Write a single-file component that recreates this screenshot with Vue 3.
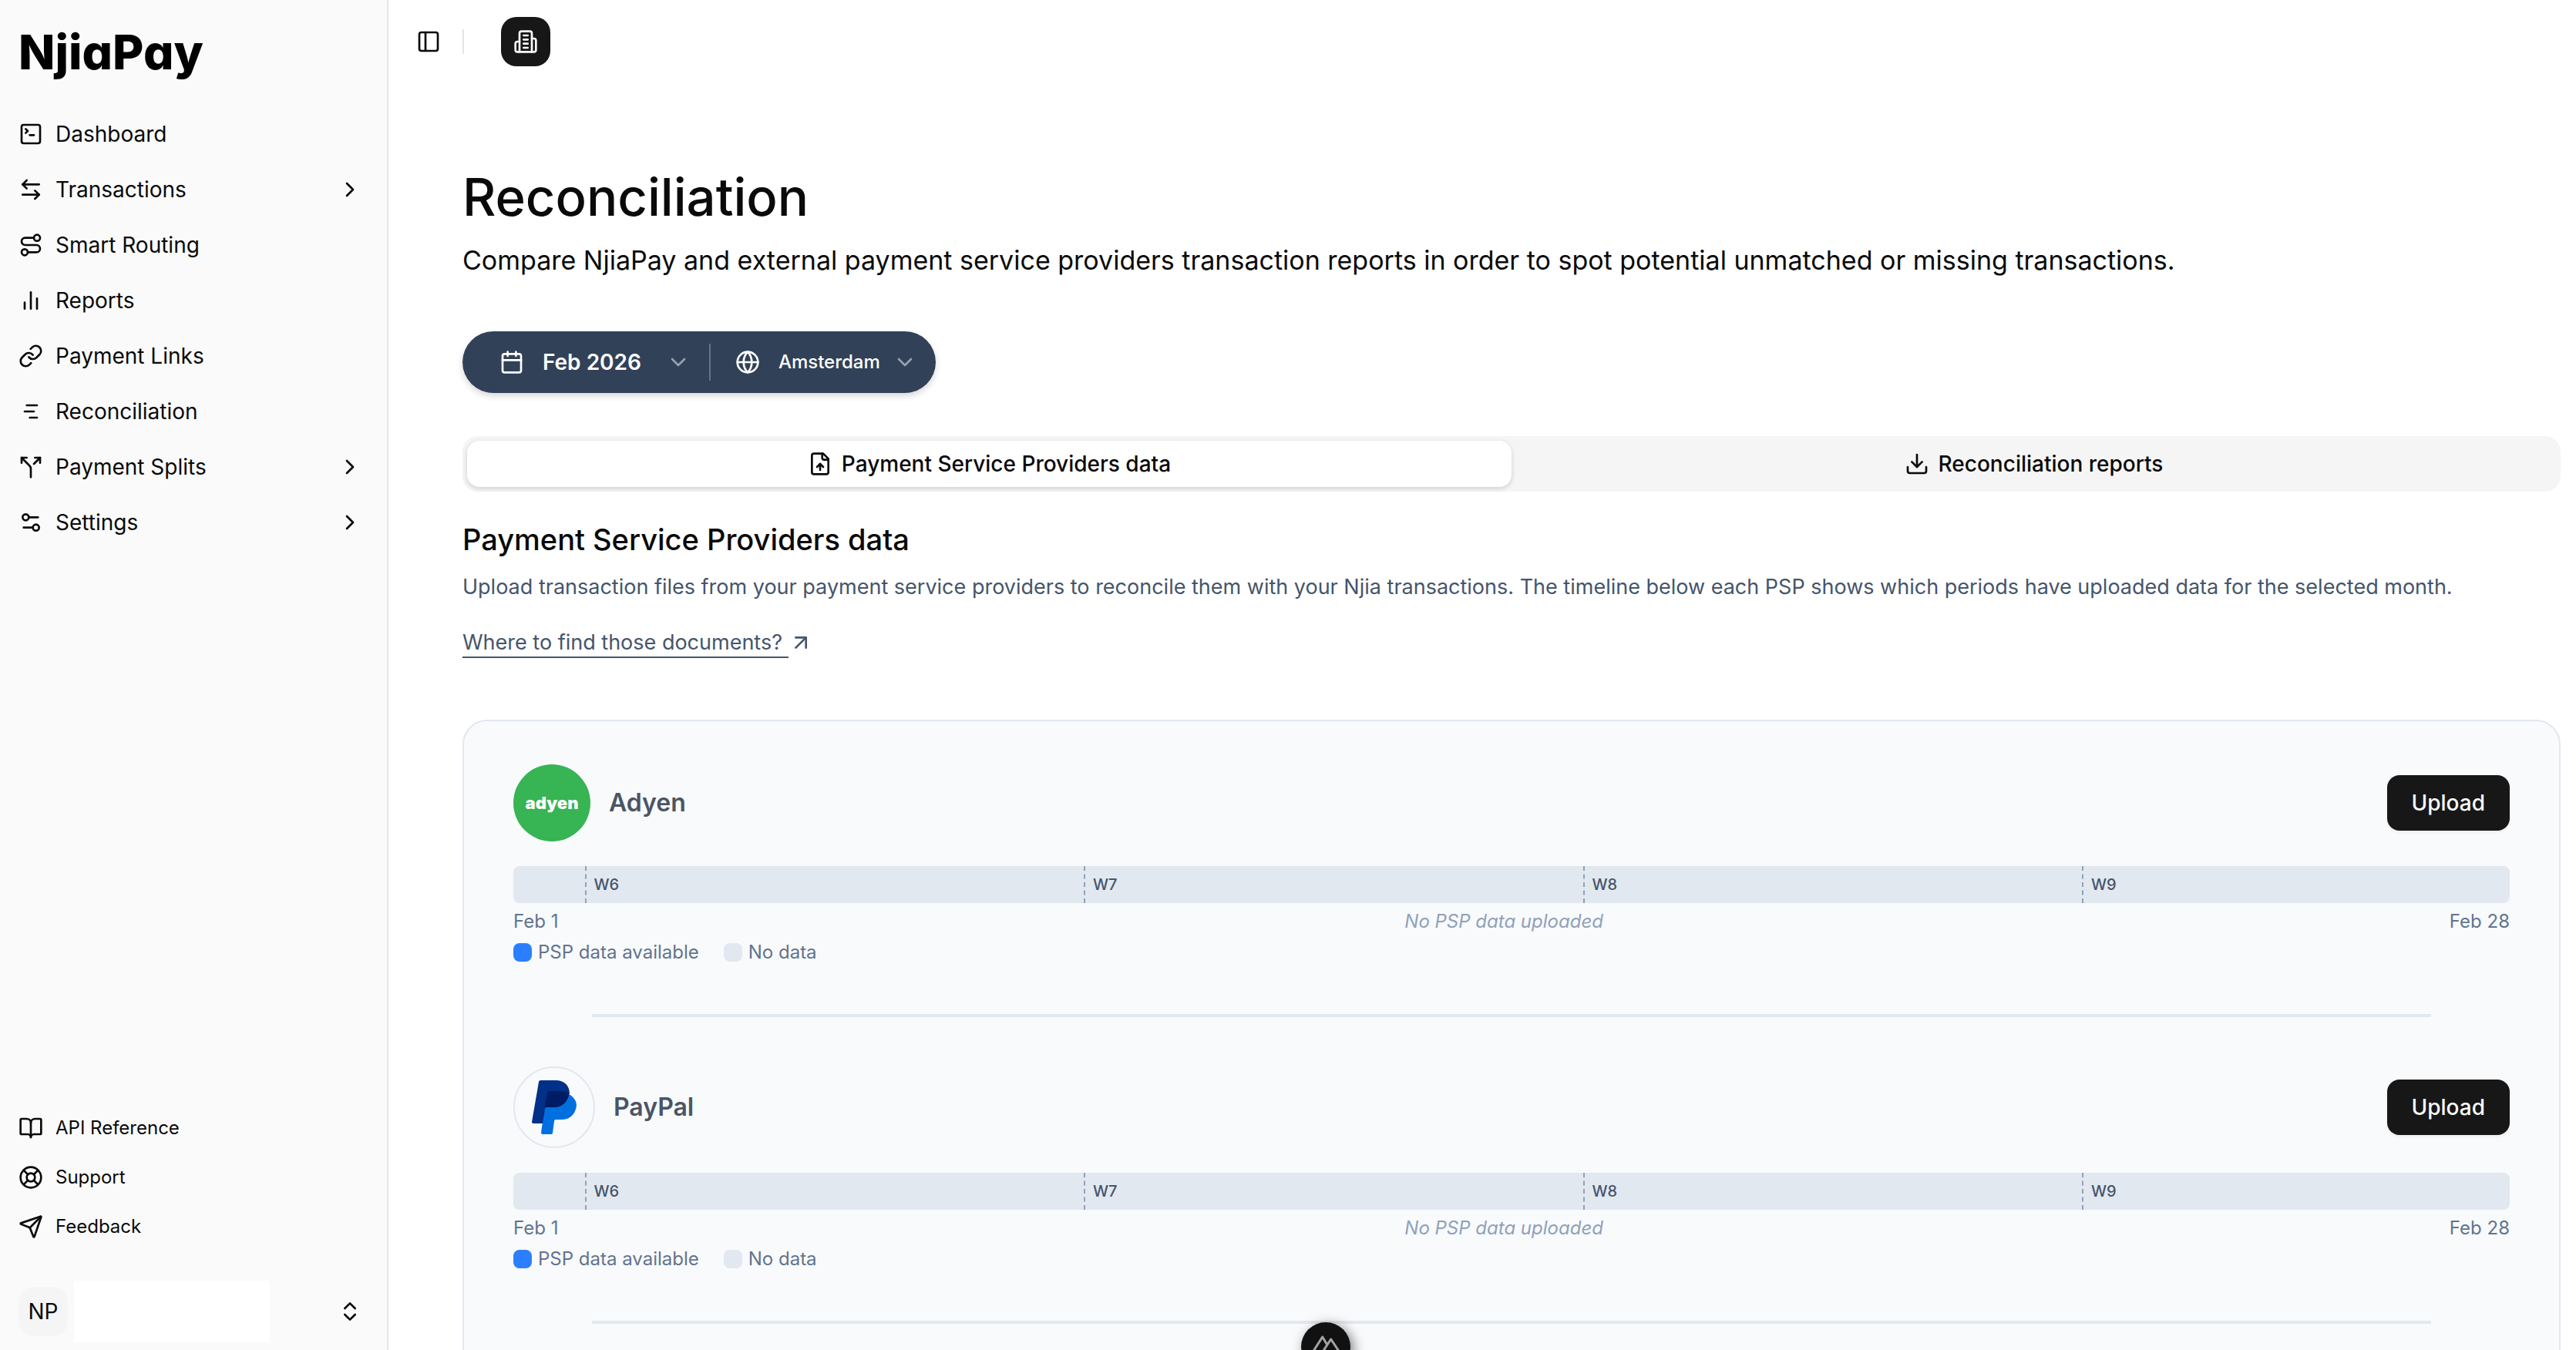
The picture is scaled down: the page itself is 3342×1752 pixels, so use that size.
<script setup>
import { ref } from 'vue';

const icons = {
  panel: ['M5 3h14a2 2 0 0 1 2 2v14a2 2 0 0 1-2 2H5a2 2 0 0 1-2-2V5a2 2 0 0 1 2-2z', 'M9 3v18'],
  building: ['M6 22V4a2 2 0 0 1 2-2h8a2 2 0 0 1 2 2v18Z', 'M6 12H4a2 2 0 0 0-2 2v6a2 2 0 0 0 2 2h2', 'M18 9h2a2 2 0 0 1 2 2v9a2 2 0 0 1-2 2h-2', 'M10 6h4', 'M10 10h4', 'M10 14h4', 'M10 18h4'],
  dashboard: ['m7 11 2-2-2-2', 'M11 13h4', 'M5 3h14a2 2 0 0 1 2 2v14a2 2 0 0 1-2 2H5a2 2 0 0 1-2-2V5a2 2 0 0 1 2-2z'],
  transactions: ['M8 3 4 7l4 4', 'M4 7h16', 'm16 21 4-4-4-4', 'M20 17H4'],
  routing: ['M9 19a3 3 0 1 1-6 0 3 3 0 0 1 6 0z', 'M9 19h8.5a3.5 3.5 0 0 0 0-7h-11a3.5 3.5 0 0 1 0-7H15', 'M21 5a3 3 0 1 1-6 0 3 3 0 0 1 6 0z'],
  reports: ['M18 20V10', 'M12 20V4', 'M6 20v-6'],
  link: ['M10 13a5 5 0 0 0 7.54.54l3-3a5 5 0 0 0-7.07-7.07l-1.72 1.71', 'M14 11a5 5 0 0 0-7.54-.54l-3 3a5 5 0 0 0 7.07 7.07l1.71-1.71'],
  gantt: ['M8 6h10', 'M6 12h9', 'M11 18h7'],
  split: ['M16 3h5v5', 'M8 3H3v5', 'M12 22v-8.3a4 4 0 0 0-1.172-2.872L3 3', 'm15 9 6-6'],
  settings: ['M14 17H5', 'M19 7h-9', 'M20 17a3 3 0 1 1-6 0 3 3 0 0 1 6 0z', 'M10 7a3 3 0 1 1-6 0 3 3 0 0 1 6 0z'],
  book: ['M12 7v14', 'M3 18a1 1 0 0 1-1-1V4a1 1 0 0 1 1-1h5a4 4 0 0 1 4 4 4 4 0 0 1 4-4h5a1 1 0 0 1 1 1v13a1 1 0 0 1-1 1h-6a3 3 0 0 0-3 3 3 3 0 0 0-3-3z'],
  support: ['M22 12a10 10 0 1 1-20 0 10 10 0 0 1 20 0z', 'm4.93 4.93 4.24 4.24', 'm14.83 9.17 4.24-4.24', 'm14.83 14.83 4.24 4.24', 'm9.17 14.83-4.24 4.24', 'M16 12a4 4 0 1 1-8 0 4 4 0 0 1 8 0z'],
  send: ['M14.536 21.686a.5.5 0 0 0 .937-.024l6.5-19a.496.496 0 0 0-.635-.635l-19 6.5a.5.5 0 0 0-.024.937l7.93 3.18a2 2 0 0 1 1.112 1.11z', 'm21.854 2.147-10.94 10.939'],
  chevronRight: ['m9 18 6-6-6-6'],
  chevronDown: ['m6 9 6 6 6-6'],
  upDown: ['m7 15 5 5 5-5', 'm7 9 5-5 5 5'],
  calendar: ['M8 2v4', 'M16 2v4', 'M5 4h14a2 2 0 0 1 2 2v14a2 2 0 0 1-2 2H5a2 2 0 0 1-2-2V6a2 2 0 0 1 2-2z', 'M3 10h18'],
  globe: ['M22 12a10 10 0 1 1-20 0 10 10 0 0 1 20 0z', 'M12 2a14.5 14.5 0 0 0 0 20 14.5 14.5 0 0 0 0-20', 'M2 12h20'],
  fileUp: ['M15 2H6a2 2 0 0 0-2 2v16a2 2 0 0 0 2 2h12a2 2 0 0 0 2-2V7Z', 'M14 2v4a2 2 0 0 0 2 2h4', 'M12 12v6', 'm15 15-3-3-3 3'],
  download: ['M12 15V3', 'M21 15v4a2 2 0 0 1-2 2H5a2 2 0 0 1-2-2v-4', 'm7 10 5 5 5-5'],
  arrowUpRight: ['M7 7h10v10', 'M7 17 17 7']
};

const navItems = [
  { label: 'Dashboard', icon: 'dashboard' },
  { label: 'Transactions', icon: 'transactions', nested: true },
  { label: 'Smart Routing', icon: 'routing' },
  { label: 'Reports', icon: 'reports' },
  { label: 'Payment Links', icon: 'link' },
  { label: 'Reconciliation', icon: 'gantt' },
  { label: 'Payment Splits', icon: 'split', nested: true },
  { label: 'Settings', icon: 'settings', nested: true }
];

const helpItems = [
  { label: 'API Reference', icon: 'book' },
  { label: 'Support', icon: 'support' },
  { label: 'Feedback', icon: 'send' }
];

const tabs = [
  { id: 'psp', label: 'Payment Service Providers data', icon: 'fileUp' },
  { id: 'reports', label: 'Reconciliation reports', icon: 'download' }
];
const activeTab = ref('psp');

const providers = ['Adyen', 'PayPal'];

// February 2026 has 28 days, the first Monday is the 2nd
const daysInMonth = 28;
const weeks = [
  { label: 'W6', day: 1 },
  { label: 'W7', day: 8 },
  { label: 'W8', day: 15 },
  { label: 'W9', day: 22 }
];

function weekOffset(day) {
  return `${(day / daysInMonth) * 100}%`;
}
</script>

<template>
  <div class="app">
    <aside class="sidebar">
      <a href="#" class="brand">NjiaPay</a>

      <nav class="nav">
        <a v-for="item in navItems" :key="item.label" href="#" class="nav-item">
          <svg class="icon" viewBox="0 0 24 24"><path v-for="d in icons[item.icon]" :key="d" :d="d" /></svg>
          <span class="nav-label">{{ item.label }}</span>
          <svg v-if="item.nested" class="icon" viewBox="0 0 24 24"><path :d="icons.chevronRight[0]" /></svg>
        </a>
      </nav>

      <nav class="help">
        <a v-for="item in helpItems" :key="item.label" href="#" class="help-item">
          <svg class="icon" viewBox="0 0 24 24"><path v-for="d in icons[item.icon]" :key="d" :d="d" /></svg>
          <span>{{ item.label }}</span>
        </a>
      </nav>

      <button class="account" type="button">
        <span class="avatar">NP</span>
        <span class="account-name"></span>
        <svg class="icon" viewBox="0 0 24 24"><path v-for="d in icons.upDown" :key="d" :d="d" /></svg>
      </button>
    </aside>

    <main class="main">
      <header class="topbar">
        <button class="panel-toggle" type="button" aria-label="Toggle sidebar">
          <svg class="icon" viewBox="0 0 24 24"><path v-for="d in icons.panel" :key="d" :d="d" /></svg>
        </button>
        <span class="topbar-divider"></span>
        <button class="org-btn" type="button" aria-label="Organisation">
          <svg class="icon" viewBox="0 0 24 24"><path v-for="d in icons.building" :key="d" :d="d" /></svg>
        </button>
      </header>

      <div class="content">
        <h1>Reconciliation</h1>
        <p class="lead">Compare NjiaPay and external payment service providers transaction reports in order to spot potential unmatched or missing transactions.</p>

        <div class="filters">
          <button class="filter month" type="button">
            <svg class="icon" viewBox="0 0 24 24"><path v-for="d in icons.calendar" :key="d" :d="d" /></svg>
            <span class="month-label">Feb 2026</span>
            <svg class="icon chevron" viewBox="0 0 24 24"><path :d="icons.chevronDown[0]" /></svg>
          </button>
          <span class="filter-divider"></span>
          <button class="filter zone" type="button">
            <svg class="icon" viewBox="0 0 24 24"><path v-for="d in icons.globe" :key="d" :d="d" /></svg>
            <span class="zone-label">Amsterdam</span>
            <svg class="icon chevron" viewBox="0 0 24 24"><path :d="icons.chevronDown[0]" /></svg>
          </button>
        </div>

        <div class="tabs" role="tablist">
          <button
            v-for="tab in tabs"
            :key="tab.id"
            type="button"
            role="tab"
            class="tab"
            :class="{ active: activeTab === tab.id }"
            :aria-selected="activeTab === tab.id"
            @click="activeTab = tab.id"
          >
            <svg class="icon" viewBox="0 0 24 24"><path v-for="d in icons[tab.icon]" :key="d" :d="d" /></svg>
            {{ tab.label }}
          </button>
        </div>

        <h2>Payment Service Providers data</h2>
        <p class="description">Upload transaction files from your payment service providers to reconcile them with your Njia transactions. The timeline below each PSP shows which periods have uploaded data for the selected month.</p>
        <a href="#" class="docs-link">
          <span class="docs-text">Where to find those documents?</span>
          <svg class="icon" viewBox="0 0 24 24"><path v-for="d in icons.arrowUpRight" :key="d" :d="d" /></svg>
        </a>

        <section class="card">
          <article v-for="provider in providers" :key="provider" class="provider">
            <div class="provider-head">
              <span v-if="provider === 'Adyen'" class="adyen-logo">adyen</span>
              <span v-else class="paypal-logo">
                <svg viewBox="0 0 58 70">
                  <path d="M50 19q8 6 8 14c-2 12-9 18-20 18H31q-2 0-2 2l-2 15q0 2-2 2H14q-2 0-2-2l6-43q1-6 5-6z" fill="#0070e0" />
                  <path d="M9 2q0-2 3-2h19c11 0 18 7 18 17C46 29 39 35 28 35H19q-2 0-2 3l-3 18H2q-2 0-2-2z" fill="#003087" />
                  <path d="M48 17C46 29 39 35 28 35H17l3-19q0-2 3-2h18q5 0 7 3z" fill="#001c64" />
                </svg>
              </span>
              <h3>{{ provider }}</h3>
              <button class="upload-btn" type="button">Upload</button>
            </div>
            <div class="timeline">
              <span v-for="week in weeks" :key="week.label" class="week" :style="{ left: weekOffset(week.day) }">{{ week.label }}</span>
            </div>
            <div class="dates">
              <span>Feb 1</span>
              <em>No PSP data uploaded</em>
              <span>Feb 28</span>
            </div>
            <div class="legend">
              <span class="legend-item"><i class="swatch available"></i>PSP data available</span>
              <span class="legend-item"><i class="swatch"></i>No data</span>
            </div>
          </article>
        </section>
      </div>
    </main>

    <button class="devtools" type="button" aria-label="Devtools">
      <svg viewBox="0 0 36 36" fill="none" stroke="#a3a3a3" stroke-width="3" stroke-linejoin="round">
        <path d="M1 25 13.700 5l6 10M13.500 25 24.700 8 36 25" />
      </svg>
    </button>
  </div>
</template>

<style>
body {
  overflow: hidden;
}
</style>

<style scoped>
.app {
  display: flex;
  height: 100vh;
  overflow: hidden;
  font-family: Inter, 'Liberation Sans', sans-serif;
  font-size: 28px;
  line-height: 40px;
  color: #0a0a0a;
  background-color: #fff;
}

button {
  font: inherit;
  color: inherit;
  border: none;
  padding: 0;
  background: none;
  cursor: pointer;
}

a {
  color: inherit;
  text-decoration: none;
}

h1, h2, h3, p {
  margin: 0;
}

.icon {
  width: 32px;
  height: 32px;
  flex-shrink: 0;
  fill: none;
  stroke: currentColor;
  stroke-width: 2;
  stroke-linecap: round;
  stroke-linejoin: round;
}

.sidebar {
  display: flex;
  flex-direction: column;
  flex-shrink: 0;
  width: 504px;
  box-sizing: border-box;
  padding: 32px 32px 10px 24px;
  background-color: #fafafa;
  border-right: 2px solid #e5e5e5;
}

/* cv11 is Inter's single-storey a */
.brand {
  font-size: 62px;
  line-height: 72px;
  font-weight: 800;
  font-feature-settings: 'cv11';
  color: #000;
}

.nav {
  display: flex;
  flex-direction: column;
  gap: 8px;
  padding-top: 38px;
}

.nav-item, .help-item {
  display: flex;
  align-items: center;
  gap: 16px;
  height: 64px;
}

.nav-label {
  flex: 1;
}

.help {
  margin-top: auto;
  font-size: 24px;
}

.account {
  display: flex;
  align-items: center;
  gap: 8px;
  height: 80px;
  margin-top: 38px;
  text-align: left;
}

.account .icon {
  margin-left: auto;
}

.avatar {
  display: flex;
  align-items: center;
  justify-content: center;
  width: 64px;
  height: 64px;
  border-radius: 20px;
  background-color: #f5f5f5;
}

.account-name {
  width: 254px;
  height: 80px;
  background-color: #fff;
}

.main {
  flex: 1;
  min-width: 0;
}

.topbar {
  display: flex;
  align-items: center;
  height: 108px;
  padding-left: 36px;
}

.panel-toggle, .org-btn {
  display: flex;
  align-items: center;
  justify-content: center;
}

.topbar-divider {
  width: 2px;
  height: 32px;
  margin: 0 48px 0 28px;
  background-color: #e5e5e5;
}

.org-btn {
  width: 64px;
  height: 64px;
  border-radius: 20px;
  background-color: #171717;
  color: #fafafa;
}

.content {
  display: flex;
  flex-direction: column;
  padding: 108px 20px 0 96px;
}

h1 {
  font-size: 67px;
  line-height: 80px;
  font-weight: 500;
}

.lead {
  margin-top: 16px;
  font-size: 34px;
  line-height: 52px;
}

.filters {
  display: flex;
  align-items: center;
  align-self: flex-start;
  height: 80px;
  margin-top: 66px;
  border-radius: 40px;
  background-color: #314158;
  color: #fff;
  box-shadow: 0 4px 8px rgba(0, 0, 0, 0.16);
}

.filter {
  display: flex;
  align-items: center;
  gap: 24px;
}

.month {
  padding: 0 24px 0 48px;
}

.month-label {
  font-weight: 600;
}

.zone {
  padding: 0 24px 0 32px;
}

.zone-label {
  font-size: 24px;
  font-weight: 500;
}

.chevron {
  color: #98a0ac;
}

.month .chevron {
  margin-left: 8px;
}

.zone .chevron {
  margin-left: -8px;
}

.filter-divider {
  width: 2px;
  height: 48px;
  background-color: #62748e;
}

.tabs {
  display: grid;
  grid-template-columns: 1fr 1fr;
  height: 72px;
  margin-top: 56px;
  padding: 6px;
  box-sizing: border-box;
  border-radius: 20px;
  background-color: #f5f5f5;
}

.tab {
  display: flex;
  align-items: center;
  justify-content: center;
  gap: 12px;
  font-weight: 500;
  border-radius: 16px;
}

.tab.active {
  background-color: #fff;
  box-shadow: 0 2px 6px rgba(0, 0, 0, 0.16);
}

h2 {
  margin-top: 32px;
  font-size: 38px;
  line-height: 60px;
  font-weight: 500;
}

.description {
  margin-top: 12px;
  font-size: 27px;
  color: #45556c;
}

.docs-link {
  display: flex;
  align-items: center;
  align-self: flex-start;
  margin-top: 32px;
  font-size: 27px;
  color: #45556c;
}

.docs-text {
  height: 40px;
  box-sizing: border-box;
  padding-right: 8px;
  border-bottom: 2px solid #45556c;
}

.card {
  margin-top: 80px;
  padding: 56px 64px;
  border: 2px solid #e2e8f0;
  border-radius: 32px;
  background-color: #f8fafc;
}

.provider {
  display: flex;
  flex-direction: column;
  gap: 8px;
}

.provider::after {
  content: '';
  height: 4px;
  margin: 56px 102px 64px;
  background-color: #e2e8f0;
}

.provider-head {
  display: flex;
  align-items: center;
  gap: 24px;
  margin-bottom: 24px;
}

.adyen-logo, .paypal-logo {
  display: flex;
  align-items: center;
  justify-content: center;
  border-radius: 50%;
}

.adyen-logo {
  width: 100px;
  height: 100px;
  background-color: #37b453;
  color: #fff;
  font-size: 22px;
  font-weight: 900;
}

.paypal-logo {
  width: 102px;
  height: 102px;
  border: 2px solid #e2e8f0;
}

.paypal-logo svg {
  width: 58px;
  height: 70px;
}

h3 {
  font-size: 32px;
  font-weight: 600;
  color: #4a5565;
}

.upload-btn {
  height: 72px;
  margin-left: auto;
  padding: 0 32px;
  border-radius: 16px;
  background-color: #171717;
  color: #fafafa;
  font-weight: 500;
  box-shadow: 0 2px 4px rgba(0, 0, 0, 0.06);
}

.timeline {
  position: relative;
  height: 48px;
  border-radius: 8px;
  background-color: #e2e8f0;
}

.week {
  position: absolute;
  top: 0;
  padding-left: 10px;
  border-left: 2px dashed #90a1b9;
  font-size: 20px;
  line-height: 48px;
  font-weight: 500;
  color: #45556c;
}

.dates, .legend {
  display: flex;
  font-size: 24px;
  line-height: 32px;
  color: #62748e;
}

.dates {
  justify-content: space-between;
}

.dates em {
  color: #90a1b9;
}

.legend {
  gap: 32px;
}

.legend-item {
  display: flex;
  align-items: center;
  gap: 8px;
}

.swatch {
  width: 24px;
  height: 24px;
  border-radius: 8px;
  background-color: #e2e8f0;
}

.swatch.available {
  background-color: #2b7fff;
}

.devtools {
  position: fixed;
  bottom: -28px;
  left: calc(50% + 17px);
  display: flex;
  align-items: center;
  justify-content: center;
  width: 64px;
  height: 64px;
  border-radius: 50%;
  background-color: #111;
  box-shadow: 4px 4px 16px rgba(0, 0, 0, 0.5);
}

.devtools svg {
  width: 36px;
  height: 36px;
}
</style>
